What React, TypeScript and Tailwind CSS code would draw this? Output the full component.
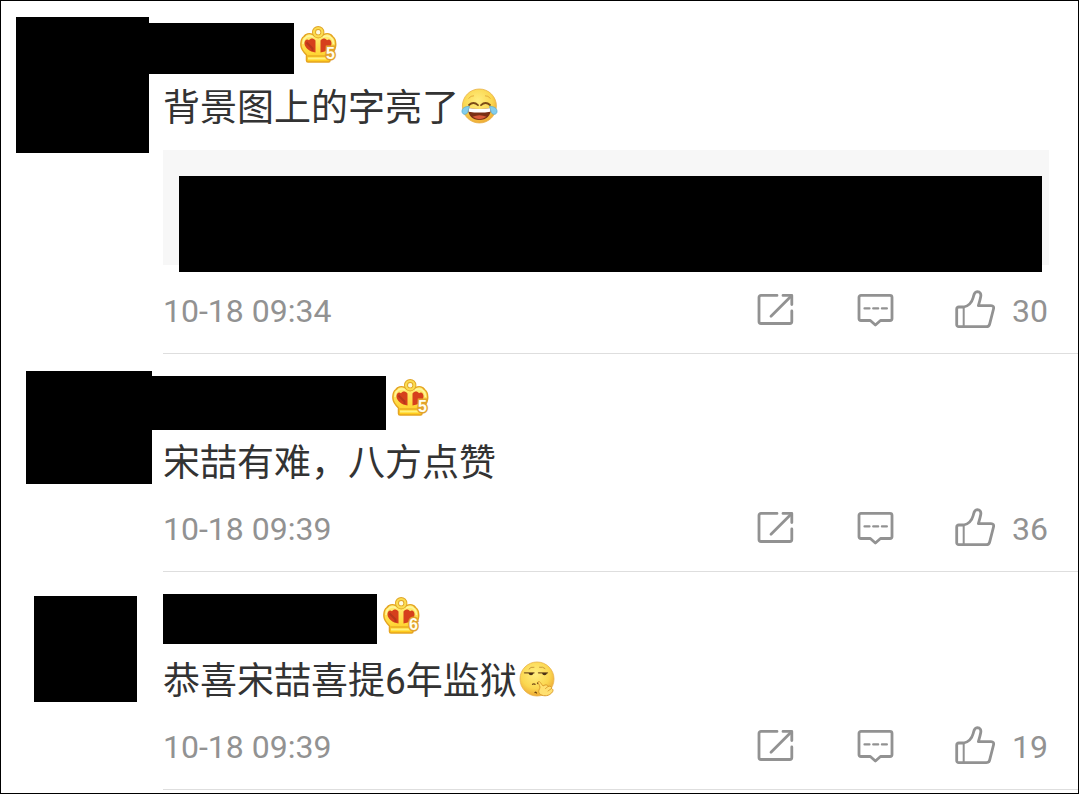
import { useId, type ReactNode } from 'react'
import { clsx } from 'clsx'

/* ── Icons ─────────────────────────────────────── */
const stroke = {
  fill: 'none',
  stroke: 'currentColor',
  strokeWidth: 2.8,
  strokeLinecap: 'round',
  strokeLinejoin: 'round',
} as const

function ShareIcon() {
  return (
    <svg width="40" height="42" viewBox="0 0 40 42" aria-hidden="true" {...stroke}>
      <path d="M20 5.4H4a2 2 0 0 0-2 2V31.5a2 2 0 0 0 2 2H32.8a2 2 0 0 0 2-2V21" />
      <path d="M26 5.4H34.8V14.5" />
      <path d="M14 26.2L34 6.2" />
    </svg>
  )
}

function CommentIcon() {
  return (
    <svg width="38" height="42" viewBox="0 0 38 42" aria-hidden="true" {...stroke}>
      <path d="M4 5.3H33a2 2 0 0 1 2 2V28.5a2 2 0 0 1-2 2H23.5L18.4 35L13.3 30.5H4a2 2 0 0 1-2-2V7.3a2 2 0 0 1 2-2Z" />
      <path d="M7.5 18.4H12.5M16.2 18.4H21.2M24.9 18.4H29.9" strokeWidth="2.2" />
    </svg>
  )
}

function LikeIcon() {
  return (
    <svg width="40" height="42" viewBox="0 0 40 42" aria-hidden="true" {...stroke}>
      <path d="M8.7 17C14 15.8 17 12 18.2 7.5C18.9 4.8 19.2 1.8 22.3 1.7C25.2 1.7 26.3 4 25.7 6.8C25.1 10 24.3 12.5 23.4 15.6H36C38.3 15.6 39 17 38.5 19L34.7 33.8C34.2 35.8 33.2 36.7 31.3 36.7H3.7a2 2 0 0 1-2-2V19a2 2 0 0 1 2-2H8.7Z" />
      <path d="M8.7 17V36.7" strokeWidth="2" />
    </svg>
  )
}

function CrownBadge({ level }: { level: number }) {
  const id = useId()
  return (
    <svg className="mt-[3px] shrink-0" width="37" height="37" viewBox="0 0 37 37" role="img" aria-label={`等级 ${level}`}>
      <defs>
        <linearGradient id={id} x1="0" y1="0" x2="0" y2="1">
          <stop offset="0" stopColor="#fff07a" />
          <stop offset="1" stopColor="#ffcb1a" />
        </linearGradient>
      </defs>
      <path
        d="M13 8.5C9 6.8 5.5 8 4 10.5C1 12.5 .6 16 1 20C1.3 23.5 4 26.5 6.5 29V34.5Q6.5 36 8 36H28.5Q30 36 30 34.5V29C33 26.5 35.3 23.5 35.6 20C36 16 35.5 12.5 32.5 10.5C31 8 27.5 6.8 23.5 8.5Z"
        fill={`url(#${id})`}
        stroke="#e5a421"
        strokeWidth="1.5"
      />
      <path d="M3 18C3.5 11 9 8.5 13.5 11M33.5 18C33 11 27.5 8.5 23 11" fill="none" stroke="#fff69c" strokeWidth="1.5" />
      <path d="M15.5 26.5V14.5C13 11.8 10.5 12.3 9 14.2C6.5 12.6 4.3 14.5 4.5 17.8C4.7 21.5 9.5 26 15.5 26.5Z" fill="#d6401c" />
      <path d="M20.5 26.5V14.5C23 11.8 25.5 12.3 27 14.2C29.5 12.6 31.7 14.5 31.5 17.8C31.3 21.5 26.5 26 20.5 26.5Z" fill="#d6401c" />
      <path d="M6.5 16.5L12.5 22.5V25" fill="none" stroke="#96301a" strokeWidth="2" opacity=".5" />
      <path d="M7.5 30H28" fill="none" stroke="#e5a421" strokeWidth="1.2" />
      <path d="M8 32.5H28" stroke="#fff27d" strokeWidth="2" />
      <circle cx="18.2" cy="6.2" r="4.2" fill="#fffbe0" stroke="#e0a526" strokeWidth="4" />
      <circle cx="18.2" cy="6.2" r="4.2" fill="none" stroke="#fbdc50" strokeWidth="2.2" />
      <text
        x="30.5"
        y="33"
        textAnchor="middle"
        className="font-['Liberation_Sans'] text-[16px] font-bold"
        fill="#fffdf0"
        stroke="#e2a32b"
        strokeWidth="3"
        paintOrder="stroke"
      >
        {level}
      </text>
    </svg>
  )
}

function FaceGradient({ id }: { id: string }) {
  return (
    <defs>
      <radialGradient id={id} cx=".45" cy=".35" r=".65">
        <stop offset="0" stopColor="#ffee80" />
        <stop offset=".65" stopColor="#fbd750" />
        <stop offset="1" stopColor="#eeaa35" />
      </radialGradient>
    </defs>
  )
}

function JoyFace() {
  const id = useId()
  return (
    <svg className="mt-[13px] shrink-0" width="37" height="37" viewBox="0 0 37 37" role="img" aria-label="笑cry">
      <FaceGradient id={id} />
      <circle cx="18.4" cy="18" r="17" fill={`url(#${id})`} stroke="#e9b14a" strokeWidth=".8" />
      <path d="M7.5 10.5Q10 7.5 13 7.8M24 7.8Q27 7.5 29.5 10.5" fill="none" stroke="#e5ae3c" strokeWidth="1" />
      <path d="M8 17Q12.5 13 17 17.2M20 17.2Q24.5 13 29 17" fill="none" stroke="#7b4b16" strokeWidth="1.8" strokeLinecap="round" />
      <path d="M7 20Q18.5 22 30 20C30 28 25.5 32 18.5 32C11.5 32 7 28 7 20Z" fill="#7a2f14" />
      <path d="M7.2 20Q18.5 22 29.8 20L29.3 23.7Q18.5 25.5 7.7 23.7Z" fill="#fff" />
      <path d="M11.5 28.8Q18.5 25.5 25.5 28.8Q18.5 33.5 11.5 28.8Z" fill="#d85a39" />
      <path d="M8.5 18.5C4 18 .5 20.5 1 24C1.5 27 5.5 27 6.7 24.5C7.5 22.5 7.5 20.5 8.5 18.5Z" fill="#83cdec" stroke="#58abd2" strokeWidth=".7" />
      <path d="M28.5 18.5C33 18 36.5 20.5 36 24C35.5 27 31.5 27 30.3 24.5C29.5 22.5 29.5 20.5 28.5 18.5Z" fill="#83cdec" stroke="#58abd2" strokeWidth=".7" />
    </svg>
  )
}

function SnickerFace() {
  const id = useId()
  return (
    <svg className="mt-[13px] shrink-0" width="37" height="37" viewBox="0 0 37 37" role="img" aria-label="偷笑">
      <FaceGradient id={id} />
      <circle cx="18" cy="18" r="17" fill={`url(#${id})`} stroke="#e9b14a" strokeWidth=".8" />
      <path d="M10 8Q11.5 5.5 15 6.2M20.5 6.2Q24 5.5 26 7.5" fill="none" stroke="#c99a3a" strokeWidth="1" strokeLinecap="round" />
      <path d="M5.5 11.8H15M19.5 11.8H28.5" stroke="#7a5520" strokeWidth="1.3" strokeLinecap="round" />
      <path d="M9.5 12H14.5Q14 14.2 12 14.2T9.5 12ZM23 12H28Q27.5 14.2 25.5 14.2T23 12Z" fill="#4a3216" />
      <path d="M13.5 23.3Q15 22.5 16 23.3M18.5 22L19 22.5M16 31.5Q17 30.8 17.5 32" fill="none" stroke="#6b4212" strokeWidth="1.3" strokeLinecap="round" />
      <path
        d="M19.5 20.5C21 20 22.5 23.5 24 25C27 23 29 24 29 25.5C31.5 24.5 33 26 32.5 27.5C35 28.5 34 31 32 32.5C29 35.5 23 35.5 20.5 32.5C18.5 30 21 28 21 26C20.5 24 18.5 21.5 19.5 20.5Z"
        fill="#ffe071"
        stroke="#dc9c2c"
        strokeWidth="1"
      />
      <path d="M29 25.5L26.5 27.5M32.5 27.5L29 30" stroke="#dc9c2c" strokeWidth=".9" strokeLinecap="round" />
    </svg>
  )
}

/* ── Data ──────────────────────────────────────── */
interface Comment {
  id: number
  text: string
  time: string
  likes: number
  level: number
  emoji?: ReactNode
  quoted?: boolean
  avatar: string
  header: string
  name: string
}

const comments: Comment[] = [
  {
    id: 1,
    text: '背景图上的字亮了',
    time: '10-18 09:34',
    likes: 30,
    level: 5,
    emoji: <JoyFace />,
    quoted: true,
    avatar: 'ml-[15px] mt-4 w-[133px] h-[136px]',
    header: 'h-[52px]',
    name: '-ml-4 w-[147px] h-[51px]',
  },
  {
    id: 2,
    text: '宋喆有难，八方点赞',
    time: '10-18 09:39',
    likes: 36,
    level: 5,
    avatar: 'ml-[25px] mt-[17px] w-[126px] h-[113px]',
    header: 'h-[54px]',
    name: '-ml-4 w-[239px] h-[54px]',
  },
  {
    id: 3,
    text: '恭喜宋喆喜提6年监狱',
    time: '10-18 09:39',
    likes: 19,
    level: 6,
    emoji: <SnickerFace />,
    avatar: 'ml-[33px] mt-6 w-[103px] h-[106px]',
    header: 'h-[54px]',
    name: 'w-[214px] h-[50px]',
  },
]

/* ── Comment row ───────────────────────────────── */
function CommentRow({ comment }: { comment: Comment }) {
  return (
    <li className="flex">
      <div className="w-[162px] shrink-0">
        <div className={clsx('bg-black', comment.avatar)} />
      </div>
      <div className="min-w-0 flex-1 border-b border-[#dedede] pt-[22px] pb-[9px]">
        <div className={clsx('flex items-start gap-1.5', comment.header)}>
          <div className={clsx('bg-black', comment.name)} />
          <CrownBadge level={comment.level} />
        </div>

        <div className="flex items-start gap-0.5 text-[37px] leading-[68px] text-[#333]">
          <p>{comment.text}</p>
          {comment.emoji}
        </div>

        {comment.quoted && (
          <div className="mt-[7px] mr-[29px] mb-[15px] h-[115px] bg-[#f7f7f7] pt-[26px] pr-[7px] pl-4">
            <div className="h-24 bg-black" />
          </div>
        )}

        <div className="flex h-16 items-center justify-between pr-[30px] text-[32px] leading-[62px] text-[#929292]">
          <time className="self-start">{comment.time}</time>
          <div className="flex items-center gap-[60px] self-start leading-[62px]">
            <button type="button" aria-label="转发">
              <ShareIcon />
            </button>
            <button type="button" aria-label="评论">
              <CommentIcon />
            </button>
            <button type="button" aria-label="赞" className="flex items-center gap-[17px]">
              <LikeIcon />
              <span>{comment.likes}</span>
            </button>
          </div>
        </div>
      </div>
    </li>
  )
}

export default function App() {
  return (
    <main className="min-h-screen border border-black bg-white font-[Roboto,'Noto_Sans_CJK_SC',sans-serif]">
      <ul>
        {comments.map((comment) => (
          <CommentRow key={comment.id} comment={comment} />
        ))}
      </ul>
    </main>
  )
}
